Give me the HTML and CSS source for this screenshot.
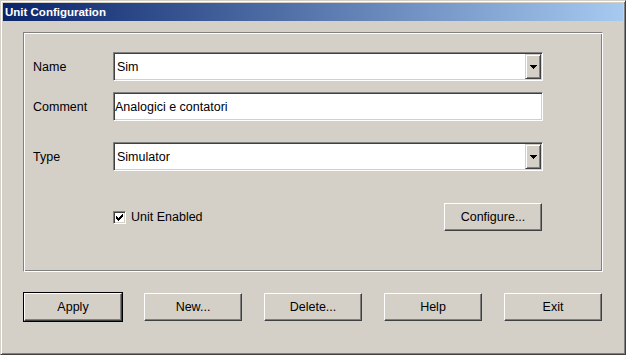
FILE: index.html
```html
<!DOCTYPE html>
<html>
<head>
  <meta charset="utf-8" />
  <title>Unit Configuration</title>
  <link rel="stylesheet" href="styles.css">
</head>
<body>
  <div class="window">
    <div class="titlebar">Unit Configuration</div>

    <div class="client">
      <!-- Gruppe mit Feldern -->
      <div class="group">
        <div class="fields">
          <div class="row">
            <span class="caption">Name</span>
            <div class="field combo">
              <span class="value">Sim</span>
              <span class="drop">
                <svg width="7" height="4" viewBox="0 0 7 4" shape-rendering="crispEdges"><path d="M0 0h7v1h-1v1h-1v1h-1v1h-1v-1h-1v-1h-1v-1h-1z" fill="#000"/></svg>
              </span>
            </div>
          </div>
          <div class="row">
            <span class="caption">Comment</span>
            <div class="field edit">
              <span class="value">Analogici e contatori</span>
            </div>
          </div>
          <div class="row row-type">
            <span class="caption">Type</span>
            <div class="field combo">
              <span class="value">Simulator</span>
              <span class="drop">
                <svg width="7" height="4" viewBox="0 0 7 4" shape-rendering="crispEdges"><path d="M0 0h7v1h-1v1h-1v1h-1v1h-1v-1h-1v-1h-1v-1h-1z" fill="#000"/></svg>
              </span>
            </div>
          </div>
        </div>

        <div class="options">
          <label class="check">
            <span class="box">
              <svg width="9" height="9" viewBox="2 2 9 9" shape-rendering="crispEdges"><path d="M3 5L5 7L10 2L10 5L5 10L3 8Z" fill="#000"/></svg>
            </span>
            Unit Enabled
          </label>
          <button class="btn">Configure...</button>
        </div>
      </div>

      <!-- Buttons unten -->
      <div class="actions">
        <button class="btn default">Apply</button>
        <button class="btn">New...</button>
        <button class="btn">Delete...</button>
        <button class="btn">Help</button>
        <button class="btn">Exit</button>
      </div>
    </div>
  </div>
</body>
</html>
```

FILE: styles.css
```css
/* Grundlayout */
html, body {
  margin: 0;
  padding: 0;
  background: #d4d0c8;
  font-family: "Liberation Sans", Arial, sans-serif;
  font-size: 12.5px;
  color: #000;
}

/* Fensterrahmen */
.window {
  width: 626px;
  height: 355px;
  box-sizing: border-box;
  background: #d4d0c8;
  border: 1px solid;
  border-color: #d4d0c8 #404040 #404040 #d4d0c8;
  box-shadow: inset 1px 1px #fff, inset -1px -1px #808080;
  padding: 2px 2px 2px 2px;
}

.titlebar {
  height: 18px;
  line-height: 18px;
  padding-left: 2px;
  background: linear-gradient(to right, #0a246a, #a6caf0);
  color: #fff;
  font-weight: bold;
  font-size: 11.5px;
}

.client {
  padding: 11px 0 0 20px;
}

/* Gruppenrahmen (geätzt) */
.group {
  width: 580px;
  height: 240px;
  box-sizing: border-box;
  border: 1px solid;
  border-color: #808080 #fff #fff #808080;
  box-shadow: inset 1px 1px #fff, inset -1px -1px #808080;
  padding: 19px 0 0 9px;
}

.row {
  display: flex;
  align-items: center;
  height: 29px;
}

.row + .row {
  margin-top: 11px;
}

.row.row-type {
  margin-top: 21px;
}

.caption {
  width: 80px;
}

/* Eingabefelder (vertieft) */
.field {
  width: 430px;
  height: 29px;
  box-sizing: border-box;
  background: #fff;
  border: 1px solid;
  border-color: #808080 #fff #fff #808080;
  box-shadow: inset 1px 1px #404040, inset -1px -1px #d4d0c8;
  display: flex;
  align-items: center;
  padding: 1px;
}

.field .value {
  flex: 1;
  padding-left: 2px;
}

.edit .value {
  padding-left: 0;
}

.drop {
  width: 16px;
  height: 25px;
  box-sizing: border-box;
  background: #d4d0c8;
  border: 1px solid;
  border-color: #d4d0c8 #404040 #404040 #d4d0c8;
  box-shadow: inset 1px 1px #fff, inset -1px -1px #808080;
  display: flex;
  align-items: center;
  justify-content: center;
}

.drop svg {
  display: block;
  margin-left: 1px;
}

/* Checkbox + Configure */
.options {
  display: flex;
  align-items: center;
  justify-content: space-between;
  width: 429px;
  margin: 32px 0 0 80px;
}

.check {
  display: flex;
  align-items: center;
  gap: 5px;
}

.box {
  width: 13px;
  height: 13px;
  box-sizing: border-box;
  background: #fff;
  border: 1px solid;
  border-color: #808080 #fff #fff #808080;
  box-shadow: inset 1px 1px #404040, inset -1px -1px #d4d0c8;
  display: flex;
  align-items: center;
  justify-content: center;
}

.box svg {
  display: block;
}

/* Knöpfe */
.btn {
  width: 98px;
  height: 28px;
  box-sizing: border-box;
  padding: 0;
  font-family: inherit;
  font-size: 12.5px;
  color: #000;
  background: #d4d0c8;
  border: 1px solid;
  border-color: #fff #404040 #404040 #fff;
  box-shadow: inset -1px -1px #808080;
  border-radius: 0;
}

.btn.default {
  box-shadow: 0 0 0 1px #000, inset -1px -1px #808080;
}

.actions {
  display: flex;
  gap: 22px;
  margin: 21px 0 0 1px;
}
```
